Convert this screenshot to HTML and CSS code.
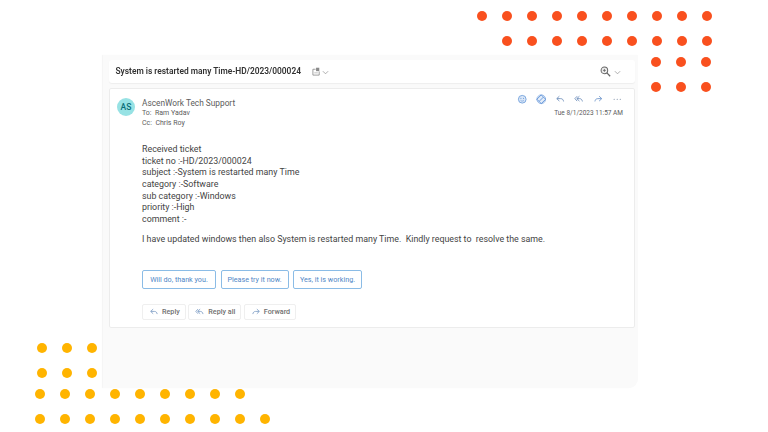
FILE: index.html
```html
<!DOCTYPE html>
<html lang="en">
<head>
<meta charset="utf-8">
<title>Ticket email</title>
<link rel="stylesheet" href="styles.css">
</head>
<body>
<div class="stage">
  <div class="dots dots-red-top">
    <i></i><i></i><i></i><i></i><i></i><i></i><i></i><i></i><i></i><i></i>
    <b></b><i></i><i></i><i></i><i></i><i></i><i></i><i></i><i></i><i></i>
  </div>
  <div class="dots dots-red-side">
    <i></i><i></i><i></i><i></i><i></i><i></i>
  </div>
  <div class="dots dots-yellow-a">
    <i></i><i></i><i></i><i></i><i></i><i></i>
  </div>
  <div class="dots dots-yellow-b">
    <i></i><i></i><i></i><i></i><i></i><i></i><i></i><i></i><i></i><b></b>
    <i></i><i></i><i></i><i></i><i></i><i></i><i></i><i></i><i></i><i></i>
  </div>

  <main class="panel">
    <header class="subject">
      <h1 class="subject-title">System is restarted many Time-HD/2023/000024</h1>
      <svg class="ic-tag" viewBox="0 0 10 10"><path d="M1 2.5h3M1 2.5v6.5h7V5" fill="none" stroke="#8a8a8a" stroke-width=".9"/><rect x="4.5" y=".8" width="3.6" height="3.8" fill="#8a8a8a"/><path d="M2.5 6.5h4" stroke="#aaa" stroke-width=".8"/></svg>
      <svg class="chev chev-tag" viewBox="0 0 8 8"><path d="M1 2.5l3 3 3-3" fill="none" stroke="#999" stroke-width=".9"/></svg>
      <span class="spacer"></span>
      <svg class="ic-zoom" viewBox="0 0 12 12"><circle cx="4.8" cy="4.8" r="3.6" fill="#eee" stroke="#666" stroke-width="1.1"/><path d="M7.5 7.5l3.6 3.6" stroke="#666" stroke-width="1.4"/><path d="M3.2 4.8h3.2M4.8 3.2v3.2" stroke="#666" stroke-width=".9"/></svg>
      <svg class="chev" viewBox="0 0 8 8"><path d="M1 2.5l3 3 3-3" fill="none" stroke="#999" stroke-width=".9"/></svg>
    </header>

    <article class="message">
      <div class="msg-head">
        <div class="avatar">AS</div>
        <div class="people">
          <div class="sender">AscenWork Tech Support</div>
          <div class="rcpt">To:&nbsp; Ram Yadav</div>
          <div class="rcpt">Cc:&nbsp; Chris Roy</div>
        </div>
        <div class="meta">
          <div class="actions">
            <svg viewBox="0 0 12 12"><circle cx="6" cy="6" r="4.4" fill="#dbe7f7" stroke="#6f9fdc" stroke-width="1"/><circle cx="4.5" cy="5" r=".6" fill="#6f9fdc"/><circle cx="7.5" cy="5" r=".6" fill="#6f9fdc"/><path d="M4 7.2c1 1.2 3 1.2 4 0" fill="none" stroke="#6f9fdc" stroke-width=".8"/></svg>
            <svg viewBox="0 0 12 12"><path d="M6 1l5 5-5 5-5-5z" fill="#e4edf9" stroke="#5f93d8" stroke-width="1.1" stroke-linejoin="round"/><path d="M3.5 8.5L8.5 3.5" stroke="#5f93d8" stroke-width="1"/><circle cx="6" cy="6" r="5" fill="none" stroke="#5f93d8" stroke-width=".7"/></svg>
            <svg viewBox="0 0 12 12"><path d="M5 2.5L2 5.3l3 2.8M2.2 5.3h4.3c2 0 3 1.2 3.3 3.2" fill="none" stroke="#6f8fbc" stroke-width="1"/></svg>
            <svg viewBox="0 0 12 12"><path d="M6.2 2.5L3.2 5.3l3 2.8M3.4 5.3h3c1.8 0 2.8 1.2 3.2 3.2" fill="none" stroke="#6f8fbc" stroke-width="1"/><path d="M3.6 2.5L1 5.3l2.6 2.8" fill="none" stroke="#6f8fbc" stroke-width="1"/></svg>
            <svg viewBox="0 0 12 12"><path d="M7 2.5L10 5.3 7 8.1M9.8 5.3H5.5c-2 0-3 1.2-3.3 3.2" fill="none" stroke="#6f96cc" stroke-width="1"/></svg>
            <svg viewBox="0 0 12 12"><circle cx="2.5" cy="6" r=".7" fill="#7d8ea5"/><circle cx="6" cy="6" r=".7" fill="#7d8ea5"/><circle cx="9.5" cy="6" r=".7" fill="#7d8ea5"/></svg>
          </div>
          <time class="stamp">Tue 8/1/2023 11:57 AM</time>
        </div>
      </div>

      <div class="body-text">
        <p>Received ticket</p>
        <p>ticket no :-HD/2023/000024</p>
        <p>subject :-System is restarted many Time</p>
        <p>category :-Software</p>
        <p>sub category :-Windows</p>
        <p>priority :-High</p>
        <p>comment :-</p>
        <p class="comment">I have updated windows then also System is restarted many Time.&nbsp; Kindly request to&nbsp; resolve the same.</p>
      </div>

      <div class="suggestions">
        <button class="sug">Will do, thank you.</button>
        <button class="sug">Please try it now.</button>
        <button class="sug">Yes, it is working.</button>
      </div>

      <div class="replies">
        <button class="rep"><svg viewBox="0 0 12 12"><path d="M5 2.5L2 5.3l3 2.8M2.2 5.3h4.3c2 0 3 1.2 3.3 3.2" fill="none" stroke="#7d9cc4" stroke-width="1"/></svg>Reply</button>
        <button class="rep"><svg viewBox="0 0 12 12"><path d="M6.2 2.5L3.2 5.3l3 2.8M3.4 5.3h3c1.8 0 2.8 1.2 3.2 3.2" fill="none" stroke="#7d9cc4" stroke-width="1"/><path d="M3.6 2.5L1 5.3l2.6 2.8" fill="none" stroke="#7d9cc4" stroke-width="1"/></svg>Reply all</button>
        <button class="rep"><svg viewBox="0 0 12 12"><path d="M7 2.5L10 5.3 7 8.1M9.8 5.3H5.5c-2 0-3 1.2-3.3 3.2" fill="none" stroke="#7d9cc4" stroke-width="1"/></svg>Forward</button>
      </div>
    </article>
  </main>
</div>
</body>
</html>
```
FILE: styles.css
```css
* { box-sizing: border-box; }
html, body { margin: 0; padding: 0; background: #fff; }
body { font-family: Roboto, "Open Sans", "Liberation Sans", sans-serif; color: #3d3d3d; }

.stage { position: relative; width: 768px; height: 432px; overflow: hidden; padding: 55px 0 0 103px; filter: blur(0.3px); }

/* decorative dot fields */
.dots { position: absolute; display: grid; grid-template-columns: repeat(var(--cols), 10px); column-gap: 15px; row-gap: 14.5px; }
.dots i { display: block; width: 10px; height: 10px; border-radius: 50%; background: var(--dot); }
.dots b { display: block; width: 10px; height: 10px; }
.dots-red-top { --cols: 10; --dot: #f9501e; left: 477px; top: 11px; }
.dots-red-side { --cols: 3; --dot: #f9501e; left: 651px; top: 57px; }
.dots-yellow-a { --cols: 3; --dot: #ffb400; left: 36.5px; top: 343px; }
.dots-yellow-b { --cols: 10; --dot: #ffb400; left: 35px; top: 388.5px; row-gap: 15px; }

/* outer panel */
.panel { position: relative; width: 535px; height: 333px; background: #fafafa; border-radius: 0 0 9px 0; padding: 5px 3px 0 6px; display: flex; flex-direction: column; gap: 5px; box-shadow: -1px 0 1px #f4f4f4; }

.subject { height: 23px; background: #fff; border-radius: 3px; box-shadow: 0 1px 1px #eeeeee; display: flex; align-items: center; padding: 0 14px 1px 6.5px; }
.subject-title { margin: 0; font-size: 8.4px; font-weight: 600; color: #333; white-space: nowrap; }
.ic-tag { width: 9px; height: 9px; margin-left: 11px; }
.chev { width: 7px; height: 7px; margin-left: 3px; margin-top: 2px; }
.chev-tag { margin-left: 1px; }
.spacer { flex: 1; }
.ic-zoom { width: 11px; height: 11px; }

.message { height: 240px; background: #fff; border: 1px solid #ececec; border-radius: 2px; padding: 8px 11px 0 7px; }

.msg-head { display: flex; align-items: flex-start; }
.avatar { width: 18px; height: 18px; border-radius: 50%; background: #97e2e4; color: #0c6f78; font-size: 8.5px; font-weight: 500; display: flex; align-items: center; justify-content: center; margin-top: 1px; }
.people { margin-left: 7px; flex: 1; }
.sender { font-size: 8.3px; line-height: 12px; color: #5c5c5c; }
.rcpt { font-size: 7px; line-height: 9.5px; color: #5c5c5c; }
.meta { display: flex; flex-direction: column; align-items: flex-end; margin-top: -3px; }
.actions { display: flex; gap: 8.5px; height: 12px; margin-right: 1px; }
.actions svg { width: 10.5px; height: 10.5px; }
.stamp { font-size: 6.5px; line-height: 10px; margin-top: 2px; color: #5c5c5c; }

.body-text { margin: 16px 0 0 25px; font-size: 8.85px; line-height: 11.65px; color: #444; }
.body-text p { margin: 0; }
.body-text .comment { margin-top: 8.5px; }

.suggestions { display: grid; grid-template-columns: 74px 68px 69px; gap: 4.5px; margin: 24.5px 0 0 25px; }
.sug { height: 19px; padding: 0; background: #fff; border: 1px solid #8bbce6; border-radius: 2px; font: 7.2px Roboto, sans-serif; color: #4f86c6; }

.replies { display: flex; gap: 2.5px; margin: 14.5px 0 0 25px; }
.rep { height: 16px; padding: 0 5px 0 6px; background: #fff; border: 1px solid #efefef; border-radius: 2px; font: 500 7.2px Roboto, sans-serif; color: #6f6f6f; display: flex; align-items: center; gap: 3px; }
.rep svg { width: 10px; height: 10px; }
```
